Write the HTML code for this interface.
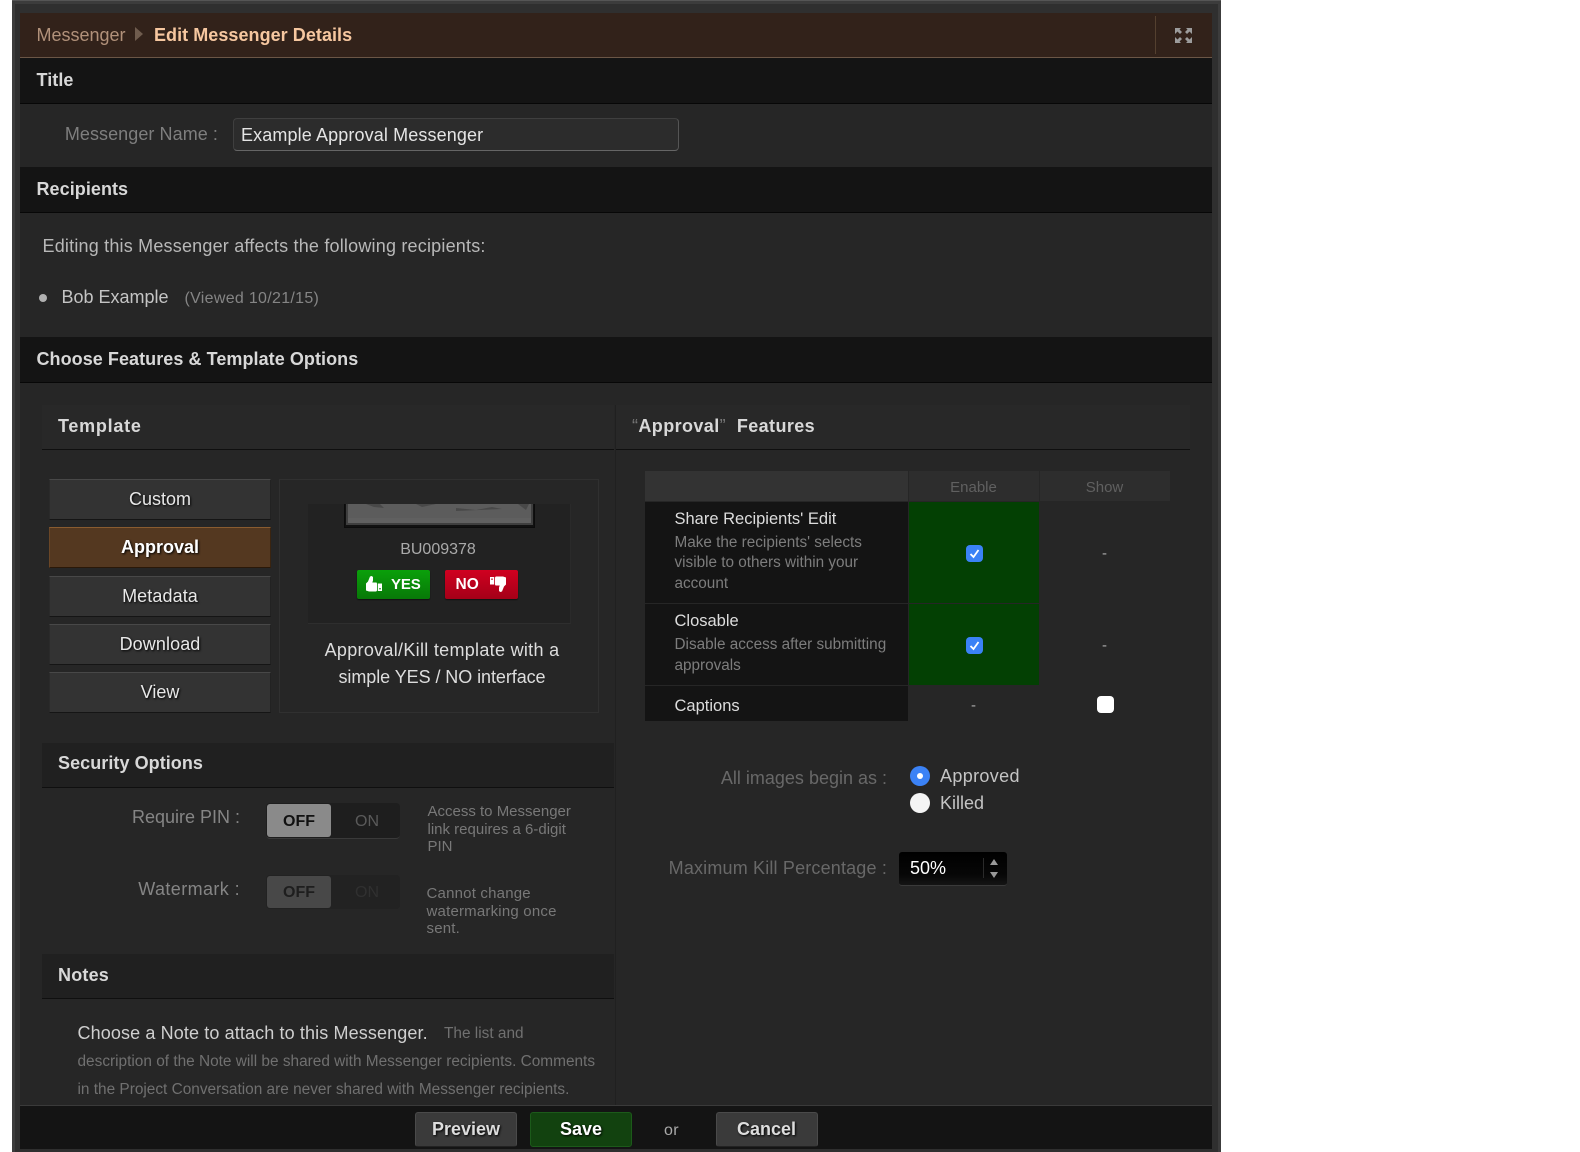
<!DOCTYPE html>
<html><head><meta charset="utf-8"><style>
html,body{margin:0;padding:0;background:#fff;}
#p{position:relative;width:1580px;height:1152px;overflow:hidden;background:#fff;font-family:"Liberation Sans",sans-serif;}
#p div,#p svg{position:absolute;}
.t{white-space:nowrap;line-height:20px;height:20px;}
.r{text-align:right;}
.c{text-align:center;}
.h{font-weight:bold;font-size:18px;color:#d8d8d8;letter-spacing:.06px;}
.sh{left:0;background:#141414;border-bottom:1px solid #070707;width:1192px;height:45px;}
.sub{background:#282828;height:44px;border-bottom:1px solid #0f0f0f;}
.sub2{background:#202020;height:44px;border-bottom:1px solid #0f0f0f;}
.b{left:50px;width:220px;height:39px;background:#333;border-top:1px solid #484848;border-bottom:1px solid #151515;border-left:1px solid #2a2a2a;border-right:1px solid #222;box-sizing:content-box;line-height:39px;text-align:center;font-size:18px;color:#e8e8e8;text-shadow:1px 1px 2px #000;}
.fb{top:1112px;width:100px;height:33px;border-radius:3px;background:#3a3a3a;border:1px solid #4a4a4a;border-bottom-color:#222;line-height:33px;text-align:center;font-size:18px;font-weight:bold;color:#ddd;text-shadow:1px 1px 2px #000;}
.cb{width:17px;height:17px;border-radius:4px;background:#3b82f6;}
.d{font-size:15.300px;color:#7d7d7d;}
.n{font-size:16.500px;color:#ddd;}
</style></head><body><div id="p">
<div style="left:12px;top:0;width:1209px;height:1152px;background:#3c3c3c;border-top:1px solid #555;box-sizing:border-box;"></div>
<div style="left:15px;top:4px;width:1203px;height:1148px;background:#2f2f2f;"></div>
<div style="left:20px;top:13px;width:1192px;height:1136px;background:#262626;overflow:hidden;">
  <div style="left:0;top:0;width:1192px;height:44px;background:#32221a;border-bottom:1px solid #6b5646;"></div>
  <div style="left:1135px;top:3px;width:1px;height:38px;background:#54402f;"></div>
  <svg style="left:1155px;top:15px;" width="17" height="15" viewBox="0 0 17 15" fill="#9c9c9c"><path d="M0 0h6l-1.500 1.500 2.500 2.500-2 2-2.500-2.500-2.500 2.500zM17 0h-6l1.500 1.500-2.500 2.500 2 2 2.500-2.500 2.500 2.500zM0 15h6l-1.500-1.500 2.500-2.500-2-2-2.500 2.500-2.500-2.500zM17 15h-6l1.500-1.500-2.500-2.500 2-2 2.500 2.500 2.500-2.500z"/></svg>
  <div class="t" style="left:16.500px;top:11.500px;font-size:18px;color:#b1917a;">Messenger</div>
  <svg style="left:115px;top:14px;" width="9" height="14" viewBox="0 0 9 14"><path d="M0 0l8 7-8 7z" fill="#6f5c4e"/></svg>
  <div class="t" style="left:134px;top:11.500px;font-size:18px;font-weight:bold;color:#f6c7a0;letter-spacing:.05px;">Edit Messenger Details</div>

  <div class="sh" style="top:45px;"></div>
  <div class="t h" style="left:16.500px;top:57px;">Title</div>
  <div class="t r" style="left:0;width:198px;top:111px;font-size:18px;color:#7e7e7e;letter-spacing:.07px;">Messenger Name :</div>
  <div style="left:213px;top:105px;width:446px;height:33px;box-sizing:border-box;background:#2c2c2c;border:1px solid #3f3f3f;border-bottom:1px solid #666;border-right:1px solid #555;border-radius:4px;"></div>
  <div class="t" style="left:221px;top:111.500px;font-size:18px;color:#e4e4e4;letter-spacing:.12px;">Example Approval Messenger</div>

  <div class="sh" style="top:154px;"></div>
  <div class="t h" style="left:16.500px;top:166px;">Recipients</div>
  <div class="t" style="left:22.500px;top:223px;font-size:18px;color:#b8b8b8;letter-spacing:.2px;">Editing this Messenger affects the following recipients:</div>
  <div style="left:19px;top:281px;width:8px;height:8px;border-radius:50%;background:#b0b0b0;"></div>
  <div class="t" style="left:41.500px;top:274px;font-size:18px;color:#c4c4c4;">Bob Example</div>
  <div class="t" style="left:164.500px;top:276px;font-size:16px;color:#858585;letter-spacing:.3px;">(Viewed 10/21/15)</div>

  <div class="sh" style="top:324px;"></div>
  <div class="t h" style="left:16.500px;top:335.500px;">Choose Features &amp; Template Options</div>

  <div class="sub" style="left:22px;top:392px;width:572px;"></div>
  <div class="sub" style="left:596px;top:392px;width:574px;"></div>
  <div style="left:595px;top:392px;width:1px;height:700px;background:#202020;"></div>
  <div class="t h" style="left:38px;top:403px;letter-spacing:.75px;">Template</div>
  <div class="t h" style="left:612px;top:403px;letter-spacing:.4px;"><span style="color:#777;font-weight:normal;">&ldquo;</span>Approval<span style="color:#777;font-weight:normal;">&rdquo;</span>&nbsp; Features</div>

  <div class="b" style="top:466px;left:29px;">Custom</div>
  <div class="b" style="top:514px;left:29px;background:#543820;border-top-color:#8a5c30;border-bottom-color:#2a1808;border-left-color:#6a4626;border-right-color:#3a2410;font-weight:bold;color:#fff;">Approval</div>
  <div class="b" style="top:562.500px;left:29px;letter-spacing:.1px;">Metadata</div>
  <div class="b" style="top:610.500px;left:29px;letter-spacing:.1px;">Download</div>
  <div class="b" style="top:658.500px;left:29px;">View</div>

  <div style="left:259px;top:466px;width:320px;height:234px;box-sizing:border-box;border:1px solid #303030;"></div>
  <div style="left:288px;top:491px;width:262px;height:119px;background:#222;border-bottom:1px solid #2e2e2e;border-right:1px solid #2a2a2a;"></div>
  <div style="left:324px;top:491px;width:191px;height:24px;box-sizing:border-box;background:linear-gradient(#111,#111);border:1px solid #0c0c0c;border-top:0;"></div>
  <svg style="left:326px;top:491px;" width="187" height="21" viewBox="0 0 187 21"><rect width="187" height="21" fill="#3e3e3e"/><rect x="2" width="183" height="19" fill="#5c5c5c"/><path d="M20 0l8 3 10 1-4-4zM70 0l6 3 14-3zM172 0l8 6 3-6zM110 4l20 2 16-3 10 2-46 2z" fill="#484848"/><path d="M2 14h183v5H2z" fill="#626262" opacity=".6"/></svg>
  <div class="t c" style="left:288px;width:260px;top:527px;font-size:16px;color:#aaa;">BU009378</div>
  <div style="left:337px;top:557px;width:73px;height:29px;border-radius:2px;background:linear-gradient(#0aa00a,#087808);box-shadow:0 1px 1px #111;"></div>
  <div class="t" style="left:371px;top:562px;font-size:15px;font-weight:bold;color:#fff;letter-spacing:-.1px;">YES</div>
  <svg style="left:345px;top:563px;" width="17" height="16" viewBox="0 0 17 16" fill="#fff"><path d="M5 .5l1.800-.5L8 1v3.500L7.300 6.500h4.200l.5 1v7l-.8 1H4l-3-1V7.500L3 5.500 4 3z"/><path d="M12.800 7.500H17v7.500h-4.200z"/><rect x="14.300" y="12" width="1.400" height="1.400" fill="#0a8a0a"/></svg>
  <div style="left:425px;top:557px;width:73px;height:29px;border-radius:2px;background:linear-gradient(#d00020,#a40018);box-shadow:0 1px 1px #111;"></div>
  <div class="t" style="left:435.500px;top:562px;font-size:15.500px;font-weight:bold;color:#fff;">NO</div>
  <svg style="left:470px;top:563px;" width="17" height="16" viewBox="0 0 17 16" fill="#fff"><path d="M12 15.500l-1.800.5L9 15v-3.500l.7-2H5.500L5 8.500v-7L5.800.5H13l3 1v7l-2 2-1 2.500z"/><path d="M4.200 8.500H0V1h4.200z"/><rect x="1.300" y="2.500" width="1.400" height="1.400" fill="#b80018"/></svg>
  <div class="t c" style="left:259px;width:326px;top:626.500px;font-size:18px;color:#ddd;letter-spacing:.3px;">Approval/Kill template with a</div>
  <div class="t c" style="left:259px;width:326px;top:654px;font-size:18px;color:#ddd;letter-spacing:-.07px;">simple YES / NO interface</div>

  <div class="sub2" style="left:22px;top:730px;width:572px;"></div>
  <div class="t h" style="left:38px;top:740px;">Security Options</div>
  <div class="t r" style="left:60px;width:160px;top:794px;font-size:18px;color:#858585;">Require PIN :</div>
  <div style="left:246px;top:790px;width:134px;height:35px;border-radius:4px;background:#1e1e1e;border-bottom:1px solid #3a3a3a;"></div>
  <div style="left:247px;top:791px;width:64px;height:33px;border-radius:3px;background:#8a8a8a;line-height:35px;text-align:center;font-size:16px;font-weight:bold;color:#111;">OFF</div>
  <div style="left:313px;top:791px;width:68px;height:33px;line-height:35px;text-align:center;font-size:16px;color:#5a5a5a;">ON</div>
  <div class="t" style="left:407.500px;top:790px;font-size:15px;color:#787878;line-height:17.500px;height:54px;">Access to Messenger<br>link requires a 6-digit<br>PIN</div>
  <div class="t r" style="left:60px;width:160px;top:866px;font-size:18px;color:#858585;letter-spacing:.4px;">Watermark :</div>
  <div style="left:246px;top:862px;width:134px;height:34px;border-radius:4px;background:#222;"></div>
  <div style="left:247px;top:863px;width:64px;height:32px;border-radius:3px;background:#484848;line-height:34px;text-align:center;font-size:16px;font-weight:bold;color:#1e1e1e;">OFF</div>
  <div style="left:313px;top:863px;width:68px;height:32px;line-height:34px;text-align:center;font-size:16px;color:#303030;">ON</div>
  <div class="t" style="left:406.500px;top:872px;font-size:15px;color:#787878;line-height:17.500px;height:54px;letter-spacing:.2px;">Cannot change<br>watermarking once<br>sent.</div>

  <div class="sub2" style="left:22px;top:941px;width:572px;"></div>
  <div class="t h" style="left:38px;top:952px;letter-spacing:.2px;">Notes</div>
  <div class="t" style="left:57.500px;top:1009.500px;font-size:18px;color:#cfcfcf;letter-spacing:.12px;">Choose a Note to attach to this Messenger.</div>
  <div class="t" style="left:424px;top:1011px;font-size:15.400px;color:#707070;">The list and</div>
  <div class="t" style="left:57.500px;top:1039px;font-size:15.400px;color:#707070;">description of the Note will be shared with Messenger recipients. Comments</div>
  <div class="t" style="left:57.500px;top:1067px;font-size:15.400px;color:#707070;">in the Project Conversation are never shared with Messenger recipients.</div>

  <div style="left:625px;top:458px;width:263px;height:30px;background:#333;"></div>
  <div style="left:889px;top:458px;width:130px;height:30px;background:#2d2d2d;"></div>
  <div style="left:1020px;top:458px;width:130px;height:30px;background:#2d2d2d;"></div>
  <div class="t c" style="left:889px;width:129px;top:464.500px;font-size:15px;color:#606060;">Enable</div>
  <div class="t c" style="left:1020px;width:129px;top:464.500px;font-size:15px;color:#606060;">Show</div>

  <div style="left:625px;top:489px;width:263px;height:101px;background:#141414;"></div>
  <div style="left:625px;top:591px;width:263px;height:81px;background:#141414;"></div>
  <div style="left:625px;top:673px;width:263px;height:35px;background:#141414;"></div>
  <div style="left:889px;top:489px;width:130px;height:101px;background:#034003;"></div>
  <div style="left:889px;top:591px;width:130px;height:81px;background:#034003;"></div>
  <div class="t n" style="left:654.500px;top:496px;">Share Recipients' Edit</div>
  <div class="t d" style="left:654.500px;top:520px;">Make the recipients' selects</div>
  <div class="t d" style="left:654.500px;top:540px;">visible to others within your</div>
  <div class="t d" style="left:654.500px;top:561px;">account</div>
  <div class="t n" style="left:654.500px;top:598px;">Closable</div>
  <div class="t d" style="left:654.500px;top:622px;">Disable access after submitting</div>
  <div class="t d" style="left:654.500px;top:643px;">approvals</div>
  <div class="t n" style="left:654.500px;top:682.500px;">Captions</div>

  <div class="cb" style="left:945.500px;top:532px;"></div>
  <svg style="left:945.500px;top:532px;" width="17" height="17" viewBox="0 0 17 17"><path d="M4.500 9l3 3 5-7" fill="none" stroke="#fff" stroke-width="1.800"/></svg>
  <div class="cb" style="left:945.500px;top:624px;"></div>
  <svg style="left:945.500px;top:624px;" width="17" height="17" viewBox="0 0 17 17"><path d="M4.500 9l3 3 5-7" fill="none" stroke="#fff" stroke-width="1.800"/></svg>
  <div class="cb" style="left:1076.500px;top:682.500px;background:#fff;"></div>
  <div class="t c" style="left:1020px;width:129px;top:531px;font-size:15px;color:#aaa;">-</div>
  <div class="t c" style="left:1020px;width:129px;top:623px;font-size:15px;color:#aaa;">-</div>
  <div class="t c" style="left:889px;width:129px;top:682.500px;font-size:15px;color:#aaa;">-</div>

  <div class="t r" style="left:640px;width:227px;top:755px;font-size:18px;color:#686868;">All images begin as :</div>
  <div style="left:889.500px;top:753px;width:20px;height:20px;border-radius:50%;background:#3b82f6;"></div>
  <div style="left:896.500px;top:760px;width:6px;height:6px;border-radius:50%;background:#fff;"></div>
  <div style="left:889.500px;top:780px;width:20px;height:20px;border-radius:50%;background:#f4f4f4;"></div>
  <div class="t" style="left:920px;top:753px;font-size:18px;color:#c4c4c4;letter-spacing:.35px;">Approved</div>
  <div class="t" style="left:920px;top:780px;font-size:18px;color:#c4c4c4;">Killed</div>
  <div class="t r" style="left:600px;width:267px;top:845px;font-size:18px;color:#686868;letter-spacing:.17px;">Maximum Kill Percentage :</div>
  <div style="left:879px;top:839px;width:108px;height:33px;border-radius:3px;background:linear-gradient(#000,#070707 70%,#141414);border-bottom:1px solid #3a3a3a;"></div>
  <div class="t" style="left:890px;top:845px;font-size:18px;color:#fff;">50%</div>
  <div style="left:963px;top:845px;width:1px;height:20px;background:#2a2a2a;"></div>
  <svg style="left:970px;top:846px;" width="8" height="19" viewBox="0 0 8 19" fill="#999"><path d="M4 0l4 6H0zM4 19l4-6H0z"/></svg>

  <div style="left:0;top:1092px;width:1192px;height:44px;background:#141414;border-top:1px solid #3a3a3a;box-sizing:border-box;"></div>
</div>
<div class="fb" style="left:415px;">Preview</div>
<div class="fb" style="left:530px;background:#12420f;border-color:#1c5a1a;color:#fff;">Save</div>
<div class="t" style="left:664px;top:1121px;font-size:16px;color:#aaa;letter-spacing:.4px;">or</div>
<div class="fb" style="left:715.500px;">Cancel</div>
</div></body></html>
